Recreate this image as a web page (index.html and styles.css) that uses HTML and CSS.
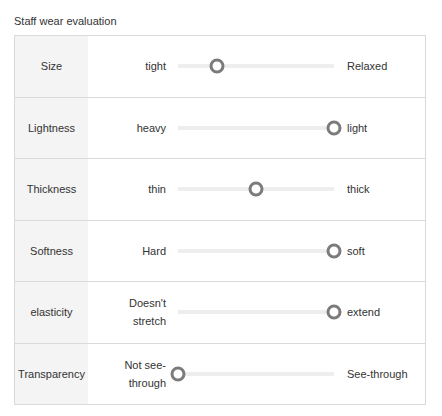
FILE: index.html
```html
<!DOCTYPE html>
<html>
<head>
<meta charset="utf-8">
<link rel="stylesheet" href="styles.css">
</head>
<body>
<div class="page">
  <div class="title">Staff wear evaluation</div>
  <div class="table">
    <div class="row">
      <div class="label">Size</div>
      <div class="min">tight</div>
      <div class="slider"><div class="track"></div><div class="thumb" style="left:25%"></div></div>
      <div class="max">Relaxed</div>
    </div>
    <div class="row">
      <div class="label">Lightness</div>
      <div class="min">heavy</div>
      <div class="slider"><div class="track"></div><div class="thumb" style="left:100%"></div></div>
      <div class="max">light</div>
    </div>
    <div class="row">
      <div class="label">Thickness</div>
      <div class="min">thin</div>
      <div class="slider"><div class="track"></div><div class="thumb" style="left:50%"></div></div>
      <div class="max">thick</div>
    </div>
    <div class="row">
      <div class="label">Softness</div>
      <div class="min">Hard</div>
      <div class="slider"><div class="track"></div><div class="thumb" style="left:100%"></div></div>
      <div class="max">soft</div>
    </div>
    <div class="row">
      <div class="label">elasticity</div>
      <div class="min">Doesn't stretch</div>
      <div class="slider"><div class="track"></div><div class="thumb" style="left:100%"></div></div>
      <div class="max">extend</div>
    </div>
    <div class="row">
      <div class="label">Transparency</div>
      <div class="min">Not see-through</div>
      <div class="slider"><div class="track"></div><div class="thumb" style="left:0%"></div></div>
      <div class="max">See-through</div>
    </div>
  </div>
</div>
</body>
</html>
```
FILE: styles.css
```css
html, body {
  margin: 0;
  padding: 0;
  background: #fff;
}
body {
  font-family: "Liberation Sans", Arial, sans-serif;
  font-size: 11px;
  color: #333;
}
.page {
  padding: 12px 14px;
  width: 412px;
}
.title {
  line-height: 18px;
  margin-bottom: 5px;
}
.table {
  border: 1px solid #dadada;
  border-bottom: none;
}
.row {
  display: grid;
  grid-template-columns: 73px 90px 156px 1fr;
  height: 61.5px;
  box-sizing: border-box;
  border-bottom: 1px solid #dadada;
}
.label {
  background: #f4f4f4;
  display: flex;
  align-items: center;
  justify-content: center;
  text-align: center;
}
.min {
  display: flex;
  align-items: center;
  justify-content: flex-end;
  text-align: right;
  padding: 0 12px 0 8px;
  line-height: 18px;
}
.slider {
  position: relative;
  display: flex;
  align-items: center;
}
.track {
  width: 100%;
  height: 4px;
  background: #eeeeee;
}
.thumb {
  position: absolute;
  top: 50%;
  width: 15px;
  height: 15px;
  box-sizing: border-box;
  border: 3px solid #7b7b7b;
  border-radius: 50%;
  background: #fff;
  transform: translate(-50%, -50%);
}
.max {
  display: flex;
  align-items: center;
  padding-left: 13px;
}
```
